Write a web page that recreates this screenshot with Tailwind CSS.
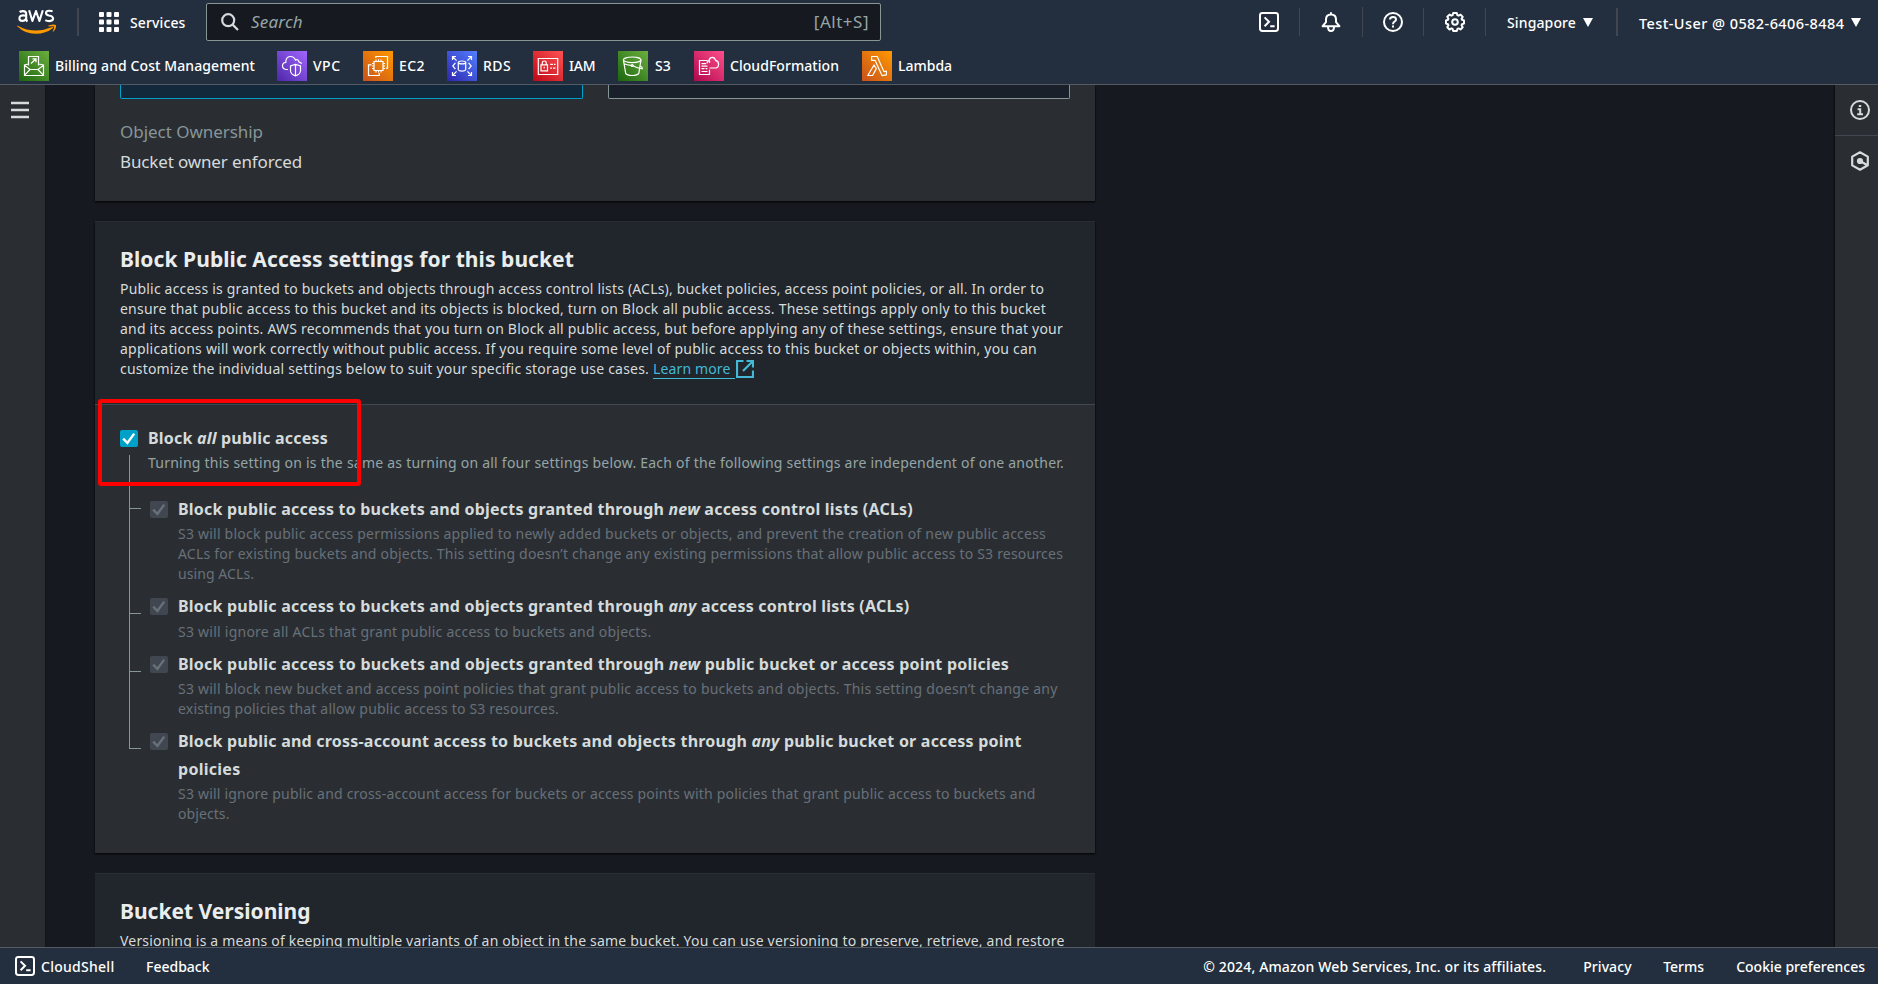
<!DOCTYPE html>
<html lang="en">
<head>
<meta charset="utf-8">
<title>S3 - Create bucket</title>
<script src="https://cdn.jsdelivr.net/npm/@tailwindcss/browser@4"></script>
</head>
<body class="w-[1878px] h-[984px] overflow-hidden flex flex-col bg-[#16191f] text-[#d5dbdb] font-['Noto_Sans',sans-serif] text-sm whitespace-nowrap">

<!-- Global navigation -->
<header class="h-[85px] shrink-0 bg-[#232f3e] border-b border-[#545b64] text-white font-medium">
  <div class="h-[44px] flex items-start">
    <svg class="ml-[17px] mt-[9px] w-[40px] h-[26px] shrink-0" viewBox="0 0 40 26" aria-label="aws">
      <g fill="none" stroke="#fff" stroke-width="2.1" stroke-linejoin="round">
        <path d="M2.6 3Q4 2.1 6 2.1Q9.2 2.1 9.2 5V9.6Q9.2 11.4 10.3 12.6M9 6.7Q2.4 5.4 2.4 9.2Q2.4 11.9 5.2 11.9Q7.6 11.9 9 9.8"/>
        <path d="M12.1 1.2L15.4 12L19 2L22.4 12L25.8 1.2"/>
        <path d="M35.6 2.4Q34.2 1.8 32.3 1.8Q29 1.8 29 4Q29 5.8 31.8 6.5Q36.1 7.3 36.1 9.6Q36.1 12.1 32.3 12.1Q30 12.1 28.3 11.1"/>
      </g>
      <path d="M.3 16.4Q9.5 21.6 19 21.6Q27 21.6 35.2 18.1Q36.6 17.8 36 19Q29 24.8 18.6 24.8Q8 24.8 .2 17.2Q-.2 16.5 .3 16.4Z" fill="#f90"/>
      <path d="M31.5 16.6Q36.5 14.7 38.9 16Q39.5 19.7 36.4 22.6Q35.4 23 35.8 22Q37.6 18.3 37 17.4Q35.6 16.9 31.8 17.4Q30.9 17.2 31.5 16.6Z" fill="#f90"/>
    </svg>
    <div class="ml-[20px] mt-[8px] w-[2px] h-[28px] bg-[#414750]"></div>
    <svg class="ml-[20px] mt-[12px] w-[20px] h-[20px] shrink-0" viewBox="0 0 20 20" fill="#fff">
      <rect width="5" height="5" rx="1"/><rect x="7.5" width="5" height="5" rx="1"/><rect x="15" width="5" height="5" rx="1"/>
      <rect y="7.5" width="5" height="5" rx="1"/><rect x="7.5" y="7.5" width="5" height="5" rx="1"/><rect x="15" y="7.5" width="5" height="5" rx="1"/>
      <rect y="15" width="5" height="5" rx="1"/><rect x="7.5" y="15" width="5" height="5" rx="1"/><rect x="15" y="15" width="5" height="5" rx="1"/>
    </svg>
    <span class="ml-[11px] mt-[13px] w-[76px] leading-5 tracking-[0.12px]">Services</span>
    <div class="mt-[3px] w-[675px] h-[38px] rounded-[2px] border border-[#879596] bg-[#16191f] flex items-center text-[17px] font-normal text-[#95a5a6]">
      <svg class="ml-[14px] w-[18px] h-[18px] shrink-0" viewBox="0 0 18 18" fill="none" stroke="#d5dbdb" stroke-width="2.2"><circle cx="7.2" cy="7.2" r="6"/><path d="M11.4 11.4L17 17"/></svg>
      <span class="ml-[12px] italic tracking-[0.2px] leading-6 -mt-px">Search</span>
      <span class="ml-auto mr-[11px] tracking-[0.5px] leading-6 -mt-px">[Alt+S]</span>
    </div>
    <div class="ml-auto flex items-start">
      <svg class="mt-[12px] w-[20px] h-[20px]" viewBox="0 0 20 20" fill="none" stroke="#fff" stroke-width="2"><rect x="1" y="1" width="18" height="18" rx="2.4"/><path d="M5.6 5.4L10 9.8L5.6 14.2M11.2 14.2H15.6"/></svg>
      <div class="ml-[20px] mt-[8px] w-px h-[28px] bg-[#414750]"></div>
      <svg class="ml-[21px] mt-[12px] w-[20px] h-[20px]" viewBox="0 0 20 20" fill="none" stroke="#fff" stroke-width="2" stroke-linejoin="round"><path d="M10 .3V2.4M1.6 14.2H18.4L15 10.2V7.4Q15 2.4 10 2.4Q5 2.4 5 7.4V10.2Z"/><path d="M7 14.8Q7 19 10 19Q13 19 13 14.8"/></svg>
      <div class="ml-[21px] mt-[7px] w-px h-[30px] bg-[#414750]"></div>
      <svg class="ml-[20px] mt-[12px] w-[20px] h-[20px]" viewBox="0 0 20 20" fill="none" stroke="#fff" stroke-width="2"><circle cx="10" cy="10" r="9"/><path d="M7 7.6Q7 5 10 5Q13 5 13 7.4Q13 8.8 11.4 9.6Q10 10.3 10 12.3M10 13.6V15.6"/></svg>
      <div class="ml-[20px] mt-[8px] w-px h-[28px] bg-[#414750]"></div>
      <svg class="ml-[21px] mt-[12px] w-[20px] h-[20px]" viewBox="0 0 20 20" fill="none" stroke="#fff" stroke-width="2" stroke-linejoin="round"><path d="M8.2 1H11.8L12.4 3.2L13.6 3.7L15.6 2.6L17.7 4.9L16.6 6.8L17 7.8L19 8.4V11.6L17 12.2L16.6 13.3L17.7 15.2L15.5 17.5L13.6 16.4L12.4 16.9L11.8 19H8.2L7.6 16.9L6.5 16.4L4.5 17.5L2.3 15.3L3.4 13.3L3 12.2L1 11.6V8.4L3 7.8L3.4 6.8L2.3 4.8L4.5 2.6L6.4 3.7L7.6 3.2Z"/><circle cx="10" cy="10" r="2.8"/></svg>
      <div class="ml-[20px] mt-[8px] w-px h-[28px] bg-[#414750]"></div>
      <span class="ml-[21px] mt-[13px] w-[76px] leading-5 tracking-[0.13px]">Singapore</span>
      <svg class="mt-[18px] w-[10px] h-[9px]" viewBox="0 0 10 9" fill="#fff"><path d="M0 0H10L5 9Z"/></svg>
      <div class="ml-[23px] mt-[8px] w-[2px] h-[28px] bg-[#414750]"></div>
      <span class="ml-[21px] mt-[13px] w-[212px] leading-5 text-[14.5px] tracking-[0.43px]">Test-User @ 0582-6406-8484</span>
      <svg class="mt-[18px] mr-[17px] w-[10px] h-[9px]" viewBox="0 0 10 9" fill="#fff"><path d="M0 0H10L5 9Z"/></svg>
    </div>
  </div>

  <!-- Favorites bar -->
  <nav class="mt-[7px] h-[30px] flex items-center pl-[19px] leading-5">
    <svg class="w-[30px] h-[30px] shrink-0" viewBox="0 0 30 30" fill="none" stroke="#fff" stroke-width="1.2"><defs><linearGradient id="green" x1="0" y1="1" x2="1" y2="0"><stop stop-color="#1b660f"/><stop offset="1" stop-color="#6cae3e"/></linearGradient><linearGradient id="purple" x1="0" y1="1" x2="1" y2="0"><stop stop-color="#4d27a8"/><stop offset="1" stop-color="#a166ff"/></linearGradient><linearGradient id="orange" x1="0" y1="1" x2="1" y2="0"><stop stop-color="#c8511b"/><stop offset="1" stop-color="#f90"/></linearGradient><linearGradient id="blue" x1="0" y1="1" x2="1" y2="0"><stop stop-color="#2e27ad"/><stop offset="1" stop-color="#527fff"/></linearGradient><linearGradient id="red" x1="0" y1="1" x2="1" y2="0"><stop stop-color="#bd0816"/><stop offset="1" stop-color="#ff5252"/></linearGradient><linearGradient id="pink" x1="0" y1="1" x2="1" y2="0"><stop stop-color="#b0084d"/><stop offset="1" stop-color="#ff4f8b"/></linearGradient></defs><rect width="30" height="30" fill="url(#green)" stroke="none"/><path d="M9.5 14.5V5.5H19.5V14.5M12 12.5L17 7.8M13.5 7.8H17V11.3M9.3 13L5.5 14V24.5H24.5V14L19.7 13M5.5 14.3L11 18.5H19L24.5 14.3M5.7 24.2L11 18.5M24.3 24.2L19 18.5"/></svg>
    <span class="ml-[6px] w-[222px] tracking-[0.09px]">Billing and Cost Management</span>
    <svg class="w-[30px] h-[30px] shrink-0" viewBox="0 0 30 30" fill="none" stroke="#fff" stroke-width="1.2"><rect width="30" height="30" fill="url(#purple)" stroke="none"/><path d="M11 18.5H9Q5.5 18 5.5 14.8Q5.5 11.8 8.8 11.4Q8.6 6 13.2 5.5Q17 5.3 18.4 9Q20.8 7.5 22.2 11.2Q24.3 11.5 24.5 12.8"/><path d="M18.5 13.3L13.5 15V20Q14 23.5 18.5 24.8Q23 23.5 23.5 20V15ZM18.5 13.3V24.8"/></svg>
    <span class="ml-[6px] w-[50px] tracking-[0.5px]">VPC</span>
    <svg class="w-[30px] h-[30px] shrink-0" viewBox="0 0 30 30" fill="none" stroke="#fff" stroke-width="1.2"><rect width="30" height="30" fill="url(#orange)" stroke="none"/><path d="M11 10.5H20V19.5H11ZM13 10.5V8.4M15.5 10.5V8.4M18 10.5V8.4M13 21.6V19.5M15.5 21.6V19.5M18 21.6V19.5M11 12.5H9M11 15H9M11 17.5H9M20 12.5H22M20 15H22M20 17.5H22"/><path d="M12.8 7V5.5H24.5V17.2H22.8M8.6 13.8H5.5V24.5H16.2V22"/></svg>
    <span class="ml-[6px] w-[48px] tracking-[0.4px]">EC2</span>
    <svg class="w-[30px] h-[30px] shrink-0" viewBox="0 0 30 30" fill="none" stroke="#fff" stroke-width="1.2"><rect width="30" height="30" fill="url(#blue)" stroke="none"/><path d="M5.5 9V5.5H9M5.5 5.5L9.6 9.6M21 5.5H24.5V9M24.5 5.5L20.4 9.6M5.5 21V24.5H9M5.5 24.5L9.6 20.4M21 24.5H24.5V21M24.5 24.5L20.4 20.4"/><ellipse cx="15" cy="11.4" rx="3.7" ry="1.4"/><path d="M11.3 11.4V18.7Q12 20.1 15 20.1Q18 20.1 18.7 18.7V11.4M8.4 11.8L5.8 15L8.4 18.2M21.6 11.8L24.2 15L21.6 18.2"/></svg>
    <span class="ml-[6px] w-[50px] tracking-[0.4px]">RDS</span>
    <svg class="w-[30px] h-[30px] shrink-0" viewBox="0 0 30 30" fill="none" stroke="#fff" stroke-width="1.2"><rect width="30" height="30" fill="url(#red)" stroke="none"/><path d="M5.3 7.5H24.7V23.5H5.3ZM8 13.8H14.5V19.8H8ZM9.3 13.8V11.8Q9.3 10 11.2 10Q13.2 10 13.2 11.8V13.8M11.2 15.8V17.6M17.2 13.3H20M21 13.3H22.5M17.2 17.2H19M20 17.2H22.5"/></svg>
    <span class="ml-[6px] w-[49px] tracking-[-0.2px]">IAM</span>
    <svg class="w-[30px] h-[30px] shrink-0" viewBox="0 0 30 30" fill="none" stroke="#fff" stroke-width="1.2"><rect width="30" height="30" fill="url(#green)" stroke="none"/><ellipse cx="14.2" cy="8.8" rx="8.8" ry="2.8"/><path d="M5.4 8.8L7.7 22.4Q9 24.5 14.2 24.5Q19.5 24.5 20.8 22.4L23 8.8M14.5 14.6Q20 18 24.4 17.6Q24.6 16.4 22 14.8M6.2 12.8Q8.5 14 13 14.3"/><circle cx="14.2" cy="14.5" r=".9"/></svg>
    <span class="ml-[7px] w-[39px] tracking-[0.14px]">S3</span>
    <svg class="w-[30px] h-[30px] shrink-0" viewBox="0 0 30 30" fill="none" stroke="#fff" stroke-width="1.2"><rect width="30" height="30" fill="url(#pink)" stroke="none"/><path d="M13.6 9.5H5.5V23.5H15.5V18.8M15.5 9.5V12M7.5 12.7H12M7.5 15.2H13.5M7.5 17.7H10.5M7.5 20.5H13.5M11.6 17.7H13.4"/><path d="M15 9.6Q15.6 6.4 18.3 6.4Q20.8 6.4 21.6 9.4Q24.6 10.2 24.6 13.2Q24.6 16.6 21.4 17H15.5M13 12.6Q13 9.9 15.3 9.6"/></svg>
    <span class="ml-[6px] w-[132px] tracking-[0.05px]">CloudFormation</span>
    <svg class="w-[30px] h-[30px] shrink-0" viewBox="0 0 30 30" fill="none" stroke="#fff" stroke-width="1.2" stroke-linejoin="round"><rect width="30" height="30" fill="url(#orange)" stroke="none"/><path d="M12 14L5.8 24.5H10.6L14.3 17.6ZM9.6 5.5H15.2L22 20.7L24.4 20.2V23.8L20 24.6L13 9.3H9.6Z"/></svg>
    <span class="ml-[6px]">Lambda</span>
  </nav>
</header>

<div class="h-[862px] shrink-0 flex overflow-hidden">
  <aside class="w-[46px] shrink-0 bg-[#2a2e33] border-r border-[#111418]">
    <svg class="ml-[11px] mt-[16px] w-[18px] h-[18px]" viewBox="0 0 18 18" stroke="#d5dbdb" stroke-width="2.4"><path d="M0 2H18M0 9H18M0 16H18"/></svg>
  </aside>

  <main class="ml-[49px] w-[1000px] shrink-0 flex flex-col gap-[20px]">
    <!-- Object ownership -->
    <section class="h-[116px] shrink-0 bg-[#2a2e33] px-[25px] shadow-[0_1px_2px_#000]">
      <div class="flex gap-[25px] h-[14px]">
        <div class="w-[463px] rounded-b-[2px] border border-t-0 border-[#00a1c9] bg-[#12293b]"></div>
        <div class="w-[462px] rounded-b-[2px] border border-t-0 border-[#879596] bg-[#1a2029]"></div>
      </div>
      <div class="mt-[21px] text-[17px] leading-[24px] text-[#879596] tracking-[-0.04px]">Object Ownership</div>
      <div class="mt-[6px] text-[17px] leading-[24px] tracking-[-0.14px]">Bucket owner enforced</div>
    </section>

    <!-- Block public access -->
    <section class="h-[632px] shrink-0 bg-[#2a2e33] shadow-[0_1px_2px_#000]">
      <div class="h-[184px] bg-[#21252c] border-t border-b border-t-[#2a2e33] border-b-[#414750] pt-[22px] px-[25px]">
        <h2 class="text-[21px] leading-[30px] font-bold text-[#eaeded] tracking-[0.07px]">Block Public Access settings for this bucket</h2>
        <div class="mt-[5px] leading-5">
          <div class="tracking-[0.185px]">Public access is granted to buckets and objects through access control lists (ACLs), bucket policies, access point policies, or all. In order to</div>
          <div class="tracking-[0.215px]">ensure that public access to this bucket and its objects is blocked, turn on Block all public access. These settings apply only to this bucket</div>
          <div class="tracking-[0.212px]">and its access points. AWS recommends that you turn on Block all public access, but before applying any of these settings, ensure that your</div>
          <div class="tracking-[0.222px]">applications will work correctly without public access. If you require some level of public access to this bucket or objects within, you can</div>
          <div class="flex">
            <span class="w-[533px] tracking-[0.197px]">customize the individual settings below to suit your specific storage use cases.</span>
            <a class="flex text-[#44b9d6]">
              <span class="w-[82px] h-[20px] border-b border-[#44b9d6] tracking-[0.138px]">Learn more</span>
              <svg class="ml-[1px] mt-[1px] w-[18px] h-[18px]" viewBox="0 0 18 18" fill="none" stroke="#44b9d6" stroke-width="2.2"><path d="M7.5 1H1V17H17V10.5M10.5 1H17V7.5M17 1L7 11"/></svg>
            </a>
          </div>
        </div>
      </div>

      <div class="relative pt-[22px] pl-[25px]">
        <div class="flex">
          <div class="mt-[3px] w-[18px] h-[17px] rounded-[2px] bg-[#00a1c9]"><svg class="w-[18px] h-[17px]" viewBox="0 0 18 17" fill="none" stroke="#fff" stroke-width="2.4"><path d="M3.2 8.6L7.4 13L14.2 3.6"/></svg></div>
          <div class="ml-[10px]">
            <div class="text-base leading-[22px] font-bold tracking-[0.206px]">Block <i>all</i> public access</div>
            <div class="mt-[4px] leading-5 text-[#95a5a6] tracking-[0.237px]">Turning this setting on is the same as turning on all four settings below. Each of the following settings are independent of one another.</div>
          </div>
        </div>

        <div class="pl-[10px] mt-[25px] text-[#687078] leading-5">
          <div class="h-[97px] flex">
            <div class="w-[11px] h-px mt-[10px] bg-[#879596]"></div>
            <svg class="ml-[9px] mt-[3px] w-[18px] h-[17px] shrink-0 rounded-[2px] bg-[#414750]" viewBox="0 0 18 17" fill="none" stroke="#687078" stroke-width="2.4"><path d="M3.2 8.6L7.4 13L14.2 3.6"/></svg>
            <div class="ml-[10px]">
              <div class="text-base leading-[22px] font-bold text-[#d5dbdb] tracking-[0.216px]">Block public access to buckets and objects granted through <i>new</i> access control lists (ACLs)</div>
              <div class="mt-[4px] tracking-[0.223px]">S3 will block public access permissions applied to newly added buckets or objects, and prevent the creation of new public access</div>
              <div class="tracking-[0.206px]">ACLs for existing buckets and objects. This setting doesn’t change any existing permissions that allow public access to S3 resources</div>
              <div class="tracking-[0.074px]">using ACLs.</div>
            </div>
          </div>
          <div class="h-[58px] flex">
            <div class="w-[11px] h-px mt-[18px] bg-[#879596]"></div>
            <svg class="ml-[9px] mt-[3px] w-[18px] h-[17px] shrink-0 rounded-[2px] bg-[#414750]" viewBox="0 0 18 17" fill="none" stroke="#687078" stroke-width="2.4"><path d="M3.2 8.6L7.4 13L14.2 3.6"/></svg>
            <div class="ml-[10px]">
              <div class="text-base leading-[22px] font-bold text-[#d5dbdb] tracking-[0.215px]">Block public access to buckets and objects granted through <i>any</i> access control lists (ACLs)</div>
              <div class="mt-[5px] tracking-[0.245px]">S3 will ignore all ACLs that grant public access to buckets and objects.</div>
            </div>
          </div>
          <div class="h-[77px] flex">
            <div class="w-[11px] h-px mt-[18px] bg-[#879596]"></div>
            <svg class="ml-[9px] mt-[3px] w-[18px] h-[17px] shrink-0 rounded-[2px] bg-[#414750]" viewBox="0 0 18 17" fill="none" stroke="#687078" stroke-width="2.4"><path d="M3.2 8.6L7.4 13L14.2 3.6"/></svg>
            <div class="ml-[10px]">
              <div class="text-base leading-[22px] font-bold text-[#d5dbdb] tracking-[0.222px]">Block public access to buckets and objects granted through <i>new</i> public bucket or access point policies</div>
              <div class="mt-[4px] tracking-[0.231px]">S3 will block new bucket and access point policies that grant public access to buckets and objects. This setting doesn’t change any</div>
              <div class="tracking-[0.187px]">existing policies that allow public access to S3 resources.</div>
            </div>
          </div>
          <div class="flex">
            <div class="w-[11px] h-px mt-[18px] bg-[#879596]"></div>
            <svg class="ml-[9px] mt-[3px] w-[18px] h-[17px] shrink-0 rounded-[2px] bg-[#414750]" viewBox="0 0 18 17" fill="none" stroke="#687078" stroke-width="2.4"><path d="M3.2 8.6L7.4 13L14.2 3.6"/></svg>
            <div class="ml-[10px] -mt-[3px]">
              <div class="text-base leading-[28px] font-bold text-[#d5dbdb] tracking-[0.216px]">Block public and cross-account access to buckets and objects through <i>any</i> public bucket or access point</div>
              <div class="text-base leading-[28px] font-bold text-[#d5dbdb] tracking-[0.275px]">policies</div>
              <div class="mt-px tracking-[0.202px]">S3 will ignore public and cross-account access for buckets or access points with policies that grant public access to buckets and</div>
              <div class="tracking-[0.084px]">objects.</div>
            </div>
          </div>
        </div>
        <!-- Tree connector and highlight frame -->
        <div class="absolute left-[34px] top-[50px] w-px h-[294px] bg-[#879596]"></div>
        <div class="absolute left-[3px] -top-[6px] w-[263px] h-[87px] rounded-[3px] border-4 border-[#f00]"></div>
      </div>
    </section>

    <!-- Bucket versioning -->
    <section class="h-[120px] shrink-0 bg-[#21252c] border-t border-[#2a2e33] pt-[22px] px-[25px]">
      <h2 class="text-[21px] leading-[30px] font-bold text-[#eaeded]">Bucket Versioning</h2>
      <p class="mt-[5px] leading-5 tracking-[0.19px]">Versioning is a means of keeping multiple variants of an object in the same bucket. You can use versioning to preserve, retrieve, and restore</p>
    </section>
  </main>

  <aside class="ml-auto w-[43px] shrink-0 bg-[#2a2e33] shadow-[-1px_0_1px_#0c0e11]">
    <div class="h-[51px] border-b border-[#414750] pl-[15px] pt-[15px]">
      <svg class="w-[20px] h-[20px]" viewBox="0 0 20 20" fill="none" stroke="#d5dbdb" stroke-width="2"><circle cx="10" cy="10" r="9"/><path d="M8.8 5.9H11.2M7.6 9.2H10.2V14.2M7.2 14.2H13"/></svg>
    </div>
    <div class="pl-[15px] pt-[15px]">
      <svg class="w-[20px] h-[20px]" viewBox="0 0 20 20" fill="none" stroke="#d5dbdb" stroke-width="2.2" stroke-linejoin="round"><path d="M17.8 12.6V5.6L10 1.3L2.2 5.6V14.4L10 18.7L17.8 14.2V12.6M10 10L16.6 13.8"/><circle cx="10" cy="10" r="2" fill="#d5dbdb"/></svg>
    </div>
  </aside>
</div>

<!-- Footer -->
<footer class="h-[37px] shrink-0 bg-[#232f3e] border-t border-[#545b64] flex items-center text-white font-medium leading-5">
  <svg class="ml-[15px] w-[20px] h-[20px]" viewBox="0 0 20 20" fill="none" stroke="#fff" stroke-width="2"><rect x="1" y="1" width="18" height="18" rx="2.4"/><path d="M5.6 5.4L10 9.8L5.6 14.2M11.2 14.2H15.6"/></svg>
  <span class="ml-[6px] w-[105px] tracking-[0.27px] mt-px">CloudShell</span>
  <span class="mt-px">Feedback</span>
  <div class="ml-auto mr-[13px] mt-px flex">
    <span class="w-[380px] tracking-[0.15px]">© 2024, Amazon Web Services, Inc. or its affiliates.</span>
    <span class="w-[80px] tracking-[0.08px]">Privacy</span>
    <span class="w-[73px]">Terms</span>
    <span>Cookie preferences</span>
  </div>
</footer>
</body>
</html>
